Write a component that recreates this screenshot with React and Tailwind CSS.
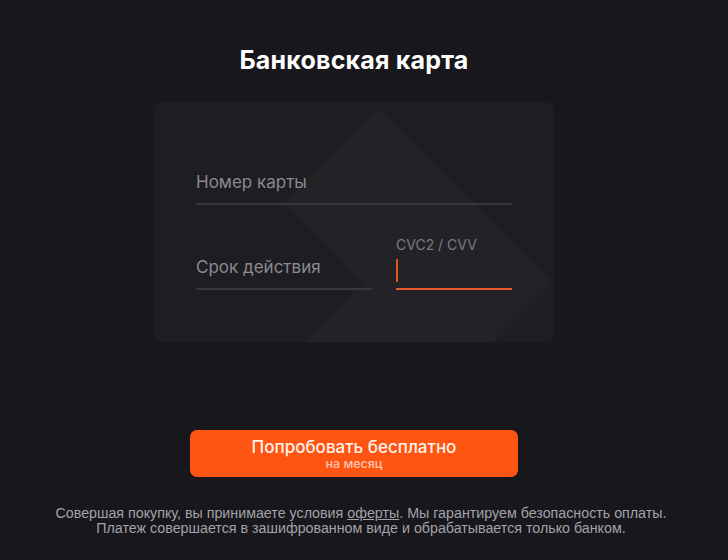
export default function App() {
  return (
    <div className="min-h-screen w-full bg-[#18171c] flex flex-col items-center font-['Inter',sans-serif]">
      <div className="w-full pr-5 flex flex-col items-center">
        <h1 className="mt-[44px] text-[25px] leading-[32px] font-bold text-white tracking-[0.2px]">
          Банковская карта
        </h1>
        <div className="relative mt-[26px] w-[400px] h-[240px] rounded-[9px] bg-[#1e1d22] overflow-hidden">
          <svg className="absolute inset-0" width="400" height="240" viewBox="0 0 400 240">
            <polygon
              points="131,101 225,7 399,181 340,240 150,240 209,181"
              fill="#232227"
            />
          </svg>
          <div className="relative px-[42px] pt-[60px] flex flex-col">
            <div className="h-[43px] flex items-center border-b-2 border-[#38373c]">
              <span className="text-[17px] text-[#8b8a8f]">Номер карты</span>
            </div>
            <div className="mt-[32px] flex items-end gap-6">
              <div className="w-[176px] h-[43px] flex items-center border-b-2 border-[#38373c]">
                <span className="text-[17px] text-[#8b8a8f]">Срок действия</span>
              </div>
              <div className="flex-1 flex flex-col">
                <span className="text-[14px] leading-[16px] text-[#7c7b80] mb-[2px]">CVC2 / CVV</span>
                <div className="h-[35px] border-b-2 border-[#e85a2c] pt-[4px]">
                  <div className="w-[2px] h-[23px] bg-[#e0552a]"></div>
                </div>
              </div>
            </div>
          </div>
        </div>
        <button className="mt-[88px] w-[328px] h-[47px] rounded-[7px] bg-[#ff5513] flex flex-col items-center justify-center">
          <span className="text-[17px] leading-[20px] font-medium text-[#fff1ea]">Попробовать бесплатно</span>
          <span className="text-[12.5px] leading-[14px] font-medium text-[#ffc6ae]">на месяц</span>
        </button>
      </div>
      <div className="w-full pr-[6px] mt-[29px] text-center text-[14.25px] leading-[15px] text-[#a3a2a7] font-['Liberation_Sans',sans-serif]">
        <p>
          Совершая покупку, вы принимаете условия <span className="underline">оферты</span>. Мы гарантируем безопасность оплаты.
        </p>
        <p>Платеж совершается в зашифрованном виде и обрабатывается только банком.</p>
      </div>
    </div>
  );
}
